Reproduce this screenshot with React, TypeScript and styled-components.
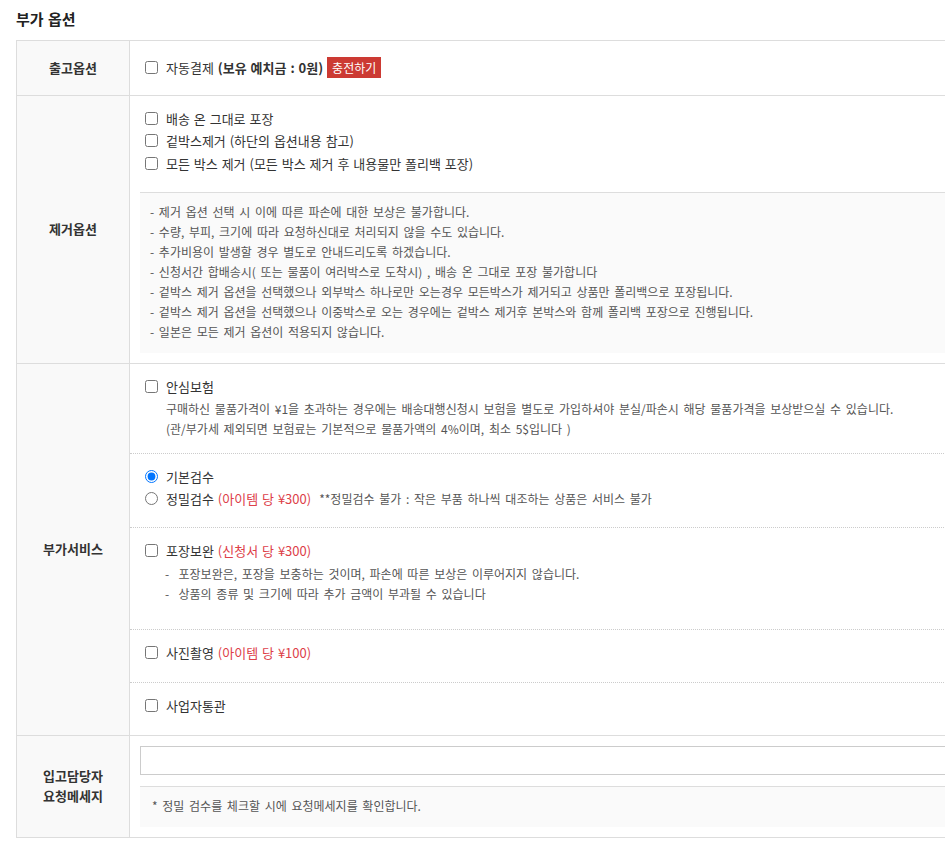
import React from 'react';
import styled, { createGlobalStyle } from 'styled-components';

const Global = createGlobalStyle`
  html, body { margin: 0; padding: 0; background: #fff; }
  body {
    font-family: "Noto Sans CJK KR", "Noto Sans", sans-serif;
    color: #333;
    overflow: hidden;
    word-spacing: 1px;
  }
  * { box-sizing: border-box; }
`;

const Page = styled.div`
  padding: 8px 0 0 16px;
  width: 1200px;
`;

const Title = styled.h2`
  margin: 0 0 10px;
  font-size: 15px;
  line-height: 22px;
  font-weight: 700;
  color: #222;
`;

const Table = styled.div`
  width: 1100px;
  border-top: 1px solid #ddd;
  border-left: 1px solid #ddd;
`;

const Row = styled.div`
  display: flex;
  border-bottom: 1px solid #ddd;
`;

const Head = styled.div`
  flex: 0 0 113px;
  display: flex;
  align-items: center;
  justify-content: center;
  text-align: center;
  background: #f9f9f9;
  border-right: 1px solid #ddd;
  font-size: 13px;
  line-height: 20px;
  font-weight: 700;
  color: #333;
`;

const Cell = styled.div<{ $pad: string }>`
  flex: 1;
  min-width: 0;
  padding: ${p => p.$pad};
`;

const Option = styled.label<{ $h?: number }>`
  display: flex;
  align-items: center;
  gap: 8px;
  height: ${p => p.$h ?? 22}px;
  font-size: 13px;
  color: #333;
  white-space: nowrap;
`;

const Box = styled.input`
  margin: 0;
  width: 13px;
  height: 13px;
  flex: 0 0 13px;
`;

const Strong = styled.b`
  font-weight: 700;
`;

const ChargeButton = styled.span`
  display: inline-block;
  margin-left: 4px;
  padding: 0 5px;
  height: 21px;
  line-height: 21px;
  background: #cc3a33;
  color: #fff;
  font-size: 12px;
`;

const OptionList = styled.div`
  padding-left: 5px;
`;

const NoteBox = styled.div<{ $mt: number; $pad: string }>`
  margin-top: ${p => p.$mt}px;
  border-top: 1px solid #ddd;
  background: #fafafa;
  padding: ${p => p.$pad};
`;

const NoteLine = styled.div`
  font-size: 12px;
  line-height: 20px;
  color: #555;
  white-space: nowrap;
  word-spacing: 2px;
`;

const Section = styled.div<{ $pb: number }>`
  padding: 12px 0 ${p => p.$pb}px 15px;
  & + & {
    border-top: 1px dotted #ccc;
  }
`;

const Desc = styled.div`
  margin-top: 1px;
  padding-left: 21px;
  font-size: 12px;
  line-height: 19px;
  color: #555;
  white-space: nowrap;
  word-spacing: 2px;
`;

const SubList = styled.div`
  margin: 2px 0 8px;
  padding-left: 20px;
`;

const Price = styled.span`
  color: #dd4049;
  margin-left: 4px;
`;

const Hint = styled.span`
  margin-left: 8px;
  font-size: 12px;
  color: #555;
  word-spacing: 2px;
`;

const TextInput = styled.input`
  display: block;
  width: 100%;
  height: 29px;
  margin: 0;
  border: 1px solid #ccc;
  background: #fff;
  outline: none;
`;

const removeNotes = [
  '제거 옵션 선택 시 이에 따른 파손에 대한 보상은 불가합니다.',
  '수량, 부피, 크기에 따라 요청하신대로 처리되지 않을 수도 있습니다.',
  '추가비용이 발생할 경우 별도로 안내드리도록 하겠습니다.',
  '신청서간 합배송시( 또는 물품이 여러박스로 도착시) , 배송 온 그대로 포장 불가합니다',
  '겉박스 제거 옵션을 선택했으나 외부박스 하나로만 오는경우 모든박스가 제거되고 상품만 폴리백으로 포장됩니다.',
  '겉박스 제거 옵션을 선택했으나 이중박스로 오는 경우에는 겉박스 제거후 본박스와 함께 폴리백 포장으로 진행됩니다.',
  '일본은 모든 제거 옵션이 적용되지 않습니다.',
];

export default function App() {
  return (
    <Page>
      <Global />
      <Title>부가 옵션</Title>
      <Table>
        <Row>
          <Head>출고옵션</Head>
          <Cell $pad="15px 15px 17px">
            <Option>
              <Box type="checkbox" />
              <span>
                자동결제 <Strong>(보유 예치금 : 0원)</Strong>
                <ChargeButton>충전하기</ChargeButton>
              </span>
            </Option>
          </Cell>
        </Row>

        <Row>
          <Head>제거옵션</Head>
          <Cell $pad="11px 10px 10px">
            <OptionList>
              <Option $h={22.5}><Box type="checkbox" />배송 온 그대로 포장</Option>
              <Option $h={22.5}><Box type="checkbox" />겉박스제거 (하단의 옵션내용 참고)</Option>
              <Option $h={22.5}><Box type="checkbox" />모든 박스 제거 (모든 박스 제거 후 내용물만 폴리백 포장)</Option>
            </OptionList>
            <NoteBox $mt={17} $pad="9px 10px 11px">
              {removeNotes.map(n => (
                <NoteLine key={n}>-&nbsp;{n}</NoteLine>
              ))}
            </NoteBox>
          </Cell>
        </Row>

        <Row>
          <Head>부가서비스</Head>
          <Cell $pad="0">
            <Section $pb={15}>
              <Option><Box type="checkbox" />안심보험</Option>
              <Desc>구매하신 물품가격이 ¥1을 초과하는 경우에는 배송대행신청시 보험을 별도로 가입하셔야 분실/파손시 해당 물품가격을 보상받으실 수 있습니다.</Desc>
              <Desc>(관/부가세 제외되면 보험료는 기본적으로 물품가액의 4%이며, 최소 5$입니다 )</Desc>
            </Section>
            <Section $pb={17}>
              <Option><Box type="radio" name="inspect" defaultChecked />기본검수</Option>
              <Option>
                <Box type="radio" name="inspect" />
                <span>
                  정밀검수<Price>(아이템 당 ¥300)</Price>
                  <Hint>**정밀검수 불가 : 작은 부품 하나씩 대조하는 상품은 서비스 불가</Hint>
                </span>
              </Option>
            </Section>
            <Section $pb={17}>
              <Option>
                <Box type="checkbox" />
                <span>포장보완<Price>(신청서 당 ¥300)</Price></span>
              </Option>
              <SubList>
                <NoteLine>-&nbsp; 포장보완은, 포장을 보충하는 것이며, 파손에 따른 보상은 이루어지지 않습니다.</NoteLine>
                <NoteLine>-&nbsp; 상품의 종류 및 크기에 따라 추가 금액이 부과될 수 있습니다</NoteLine>
              </SubList>
            </Section>
            <Section $pb={18}>
              <Option>
                <Box type="checkbox" />
                <span>사진촬영<Price>(아이템 당 ¥100)</Price></span>
              </Option>
            </Section>
            <Section $pb={18}>
              <Option><Box type="checkbox" />사업자통관</Option>
            </Section>
          </Cell>
        </Row>

        <Row>
          <Head>입고담당자<br />요청메세지</Head>
          <Cell $pad="10px 10px 10px">
            <TextInput type="text" />
            <NoteBox $mt={11} $pad="9px 12px 11px">
              <NoteLine>* 정밀 검수를 체크할 시에 요청메세지를 확인합니다.</NoteLine>
            </NoteBox>
          </Cell>
        </Row>
      </Table>
    </Page>
  );
}
